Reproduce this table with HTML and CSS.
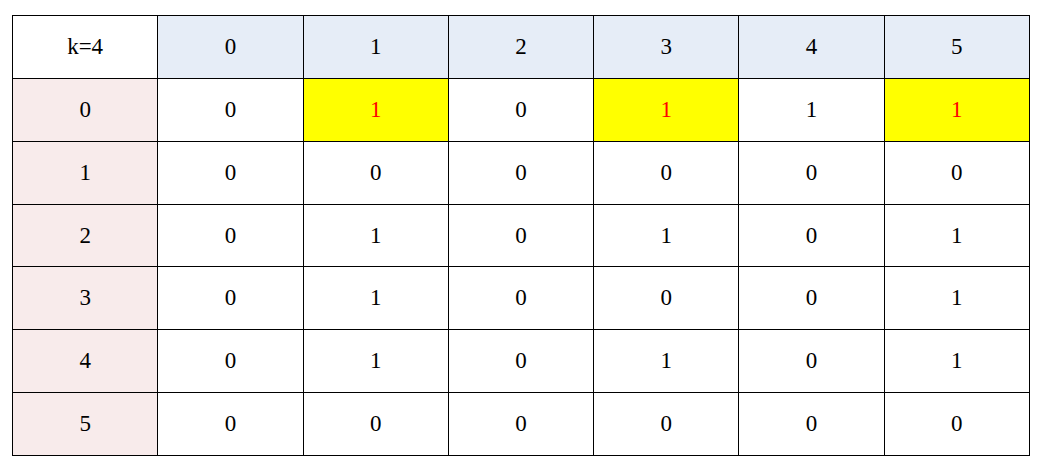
FILE: index.html
```html
<!DOCTYPE html>
<html>
<head>
<meta charset="utf-8">
<link rel="stylesheet" href="styles.css">
</head>
<body>
<table class="grid">
  <tr class="head"><td class="corner">k=4</td><td>0</td><td>1</td><td>2</td><td>3</td><td>4</td><td>5</td></tr>
  <tr><td class="rowh">0</td><td>0</td><td class="hl">1</td><td>0</td><td class="hl">1</td><td>1</td><td class="hl">1</td></tr>
  <tr><td class="rowh">1</td><td>0</td><td>0</td><td>0</td><td>0</td><td>0</td><td>0</td></tr>
  <tr><td class="rowh">2</td><td>0</td><td>1</td><td>0</td><td>1</td><td>0</td><td>1</td></tr>
  <tr><td class="rowh">3</td><td>0</td><td>1</td><td>0</td><td>0</td><td>0</td><td>1</td></tr>
  <tr><td class="rowh">4</td><td>0</td><td>1</td><td>0</td><td>1</td><td>0</td><td>1</td></tr>
  <tr><td class="rowh">5</td><td>0</td><td>0</td><td>0</td><td>0</td><td>0</td><td>0</td></tr>
</table>
</body>
</html>
```
FILE: styles.css
```css
html, body {
  margin: 0;
  background: #fff;
}
body {
  padding: 15px 0 0 12px;
  font-family: "Liberation Serif", "Times New Roman", serif;
}
.grid {
  border-collapse: collapse;
  table-layout: fixed;
  width: 1018px;
}
.grid td {
  border: 1px solid #000;
  height: 61.86px;
  padding: 0;
  text-align: center;
  vertical-align: middle;
  font-size: 23px;
  color: #000;
}
.head td {
  background: #e6edf7;
}
.head td.corner {
  background: #fff;
}
.grid td.rowh {
  background: #f8ebeb;
}
.grid td.hl {
  background: #ffff00;
  color: #ff0000;
}
```
